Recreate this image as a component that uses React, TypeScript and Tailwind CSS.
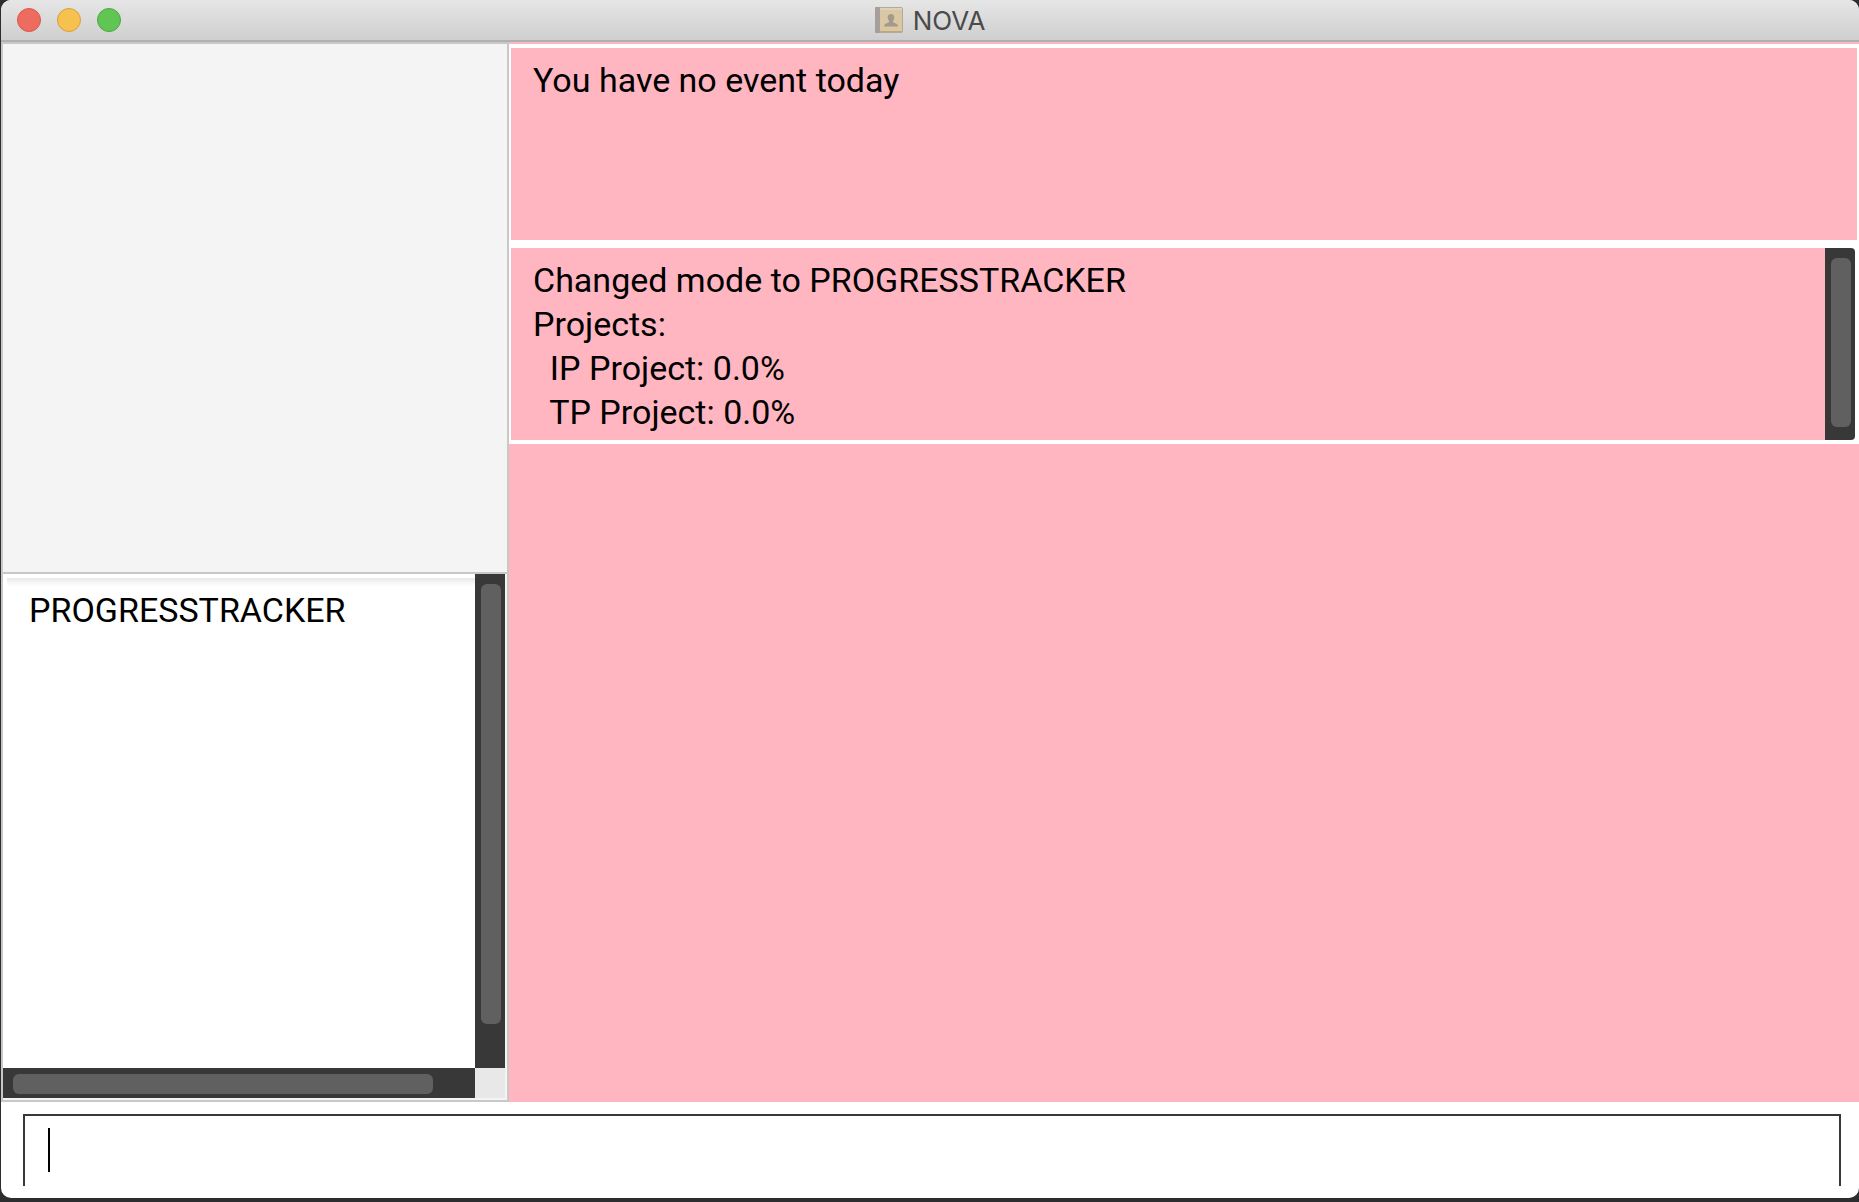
import React from "react";

function ContactsIcon() {
  return (
    <svg className="h-7 w-7" viewBox="0 0 28 28" aria-hidden="true">
      <rect x="0.5" y="1.5" width="27" height="25" rx="1" fill="#d9c8a3" stroke="#b3a999" />
      <rect x="0" y="1" width="5" height="26" rx="1" fill="#a59e9a" />
      <rect x="5" y="2" width="22" height="2" fill="#dbd2c0" />
      <rect x="5" y="25" width="22" height="1" fill="#bfa77a" />
      <path
        d="M16 8c-2 0-3.300 1.400-3.300 3.400 0 1.500.5 2.500 1.300 3.200v1.400c-.6 1.200-4.800 1-5 4.500h14c-.2-3.500-4.400-3.300-5-4.500v-1.400c.8-.7 1.300-1.700 1.300-3.200C19.300 9.400 18 8 16 8z"
        fill="#a3998c"
      />
    </svg>
  );
}

function TitleBar() {
  return (
    <header className="relative flex h-[42px] shrink-0 items-center justify-center rounded-t-[10px] border-b-2 border-[#b0b0b0] bg-linear-to-b from-[#e6e6e6] to-[#cfcfcf]">
      <div className="absolute left-4 flex gap-4">
        <button aria-label="Close" className="size-6 rounded-full border border-[#d9584e] bg-[#ee6b60]" />
        <button aria-label="Minimize" className="size-6 rounded-full border border-[#d9a03c] bg-[#f6c14f]" />
        <button aria-label="Zoom" className="size-6 rounded-full border border-[#4ba93f] bg-[#61c554]" />
      </div>
      <div className="flex items-center gap-2.5">
        <ContactsIcon />
        <h1 className="pt-0.5 font-['Inter',sans-serif] text-[26px] leading-8 text-[#4a4a4a]">NOVA</h1>
      </div>
    </header>
  );
}

function VerticalBar({ thumb, className }: { thumb: string; className: string }) {
  return (
    <div className={"flex w-[30px] shrink-0 flex-col bg-[#383838] pt-2.5 pl-1.5 " + className} aria-hidden="true">
      <div className={"w-5 rounded-md bg-[#606060] " + thumb} />
    </div>
  );
}

function Sidebar() {
  return (
    <aside className="grid w-[508px] shrink-0 grid-rows-[530fr_526fr] border-2 border-[#c8c8c8] bg-[#f4f4f4]">
      <div className="border-b-2 border-[#c8c8c8]" />
      <div className="grid grid-cols-[1fr_30px] grid-rows-[1fr_30px] pr-0.5 pb-0.5">
        <div className="bg-white pt-1 pl-1">
          <div className="h-full bg-linear-to-b from-[#e8e8e8] to-white to-[8px] pt-2.5 pl-[22px]">
            <p className="text-[34px] leading-[44px]">PROGRESSTRACKER</p>
          </div>
        </div>
        <VerticalBar thumb="h-[91%]" className="" />
        <div className="bg-[#383838] pt-1.5 pl-2.5" aria-hidden="true">
          <div className="h-5 w-[91%] rounded-md bg-[#606060]" />
        </div>
        <div className="bg-[#e8e8e8]" />
      </div>
    </aside>
  );
}

const lines = ["Changed mode to PROGRESSTRACKER", "Projects:", "  IP Project: 0.0%", "  TP Project: 0.0%"];

function Main() {
  return (
    <main className="flex min-w-0 flex-1 flex-col bg-[#ffb6c1] pt-0.5">
      <section className="border-y-4 border-r-2 border-l-2 border-white">
        <div className="h-[192px] pt-2.5 pl-[22px]">
          <p className="text-[34px] leading-[44px]">You have no event today</p>
        </div>
      </section>
      <section className="flex border-y-4 border-r-4 border-l-2 border-white bg-white">
        <div className="h-[192px] min-w-0 flex-1 overflow-hidden bg-[#ffb6c1] pt-2.5 pl-[22px]">
          {lines.map((line) => (
            <p key={line} className="text-[34px] leading-[44px] whitespace-pre">
              {line}
            </p>
          ))}
        </div>
        <VerticalBar thumb="h-[169px]" className="rounded-r" />
      </section>
    </main>
  );
}

export default function App() {
  return (
    <div className="flex h-screen flex-col bg-[#2c2d2f] pb-1 pl-px font-['Roboto',sans-serif] text-black">
      <div className="flex min-h-0 flex-1 flex-col rounded-t-[10px] rounded-b-[10px] bg-white">
        <TitleBar />
        <div className="flex min-h-0 flex-1">
          <Sidebar />
          <Main />
        </div>
        <footer className="shrink-0 px-[22px] pt-3 pr-[18px] pb-3">
          <label className="flex h-[72px] items-start border-x-2 border-t-2 border-[#383838] pt-3 pl-[23px]">
            <span className="h-11 w-0.5 bg-black" />
            <input
              type="text"
              aria-label="Command"
              className="h-11 min-w-0 flex-1 bg-transparent text-[34px] outline-none"
            />
          </label>
        </footer>
      </div>
    </div>
  );
}
